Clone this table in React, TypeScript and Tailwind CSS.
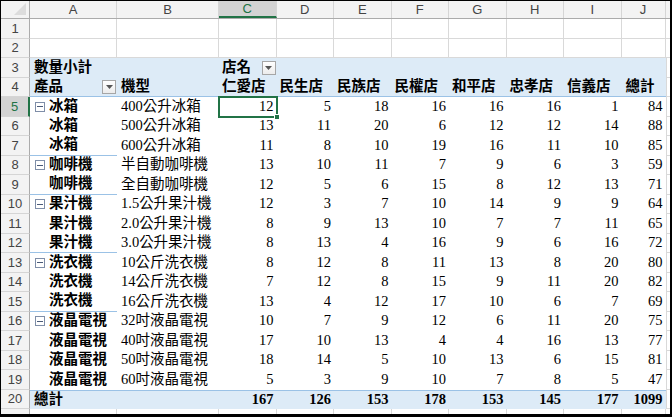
import React from 'react';

const stores = ['仁愛店', '民生店', '民族店', '民權店', '和平店', '忠孝店', '信義店'];

type Row = { group: string; first: boolean; model: string; values: number[]; total: number; sepBelow?: boolean };

const rows: Row[] = [
    { group: '冰箱', first: true, model: '400公升冰箱', values: [12, 5, 18, 16, 16, 16, 1], total: 84 },
    { group: '冰箱', first: false, model: '500公升冰箱', values: [13, 11, 20, 6, 12, 12, 14], total: 88 },
    { group: '冰箱', first: false, model: '600公升冰箱', values: [11, 8, 10, 19, 16, 11, 10], total: 85, sepBelow: true },
    { group: '咖啡機', first: true, model: '半自動咖啡機', values: [13, 10, 11, 7, 9, 6, 3], total: 59 },
    { group: '咖啡機', first: false, model: '全自動咖啡機', values: [12, 5, 6, 15, 8, 12, 13], total: 71, sepBelow: true },
    { group: '果汁機', first: true, model: '1.5公升果汁機', values: [12, 3, 7, 10, 14, 9, 9], total: 64 },
    { group: '果汁機', first: false, model: '2.0公升果汁機', values: [8, 9, 13, 10, 7, 7, 11], total: 65 },
    { group: '果汁機', first: false, model: '3.0公升果汁機', values: [8, 13, 4, 16, 9, 6, 16], total: 72, sepBelow: true },
    { group: '洗衣機', first: true, model: '10公斤洗衣機', values: [8, 12, 8, 11, 13, 8, 20], total: 80 },
    { group: '洗衣機', first: false, model: '14公斤洗衣機', values: [7, 12, 8, 15, 9, 11, 20], total: 82 },
    { group: '洗衣機', first: false, model: '16公斤洗衣機', values: [13, 4, 12, 17, 10, 6, 7], total: 69, sepBelow: true },
    { group: '液晶電視', first: true, model: '32吋液晶電視', values: [10, 7, 9, 12, 6, 11, 20], total: 75 },
    { group: '液晶電視', first: false, model: '40吋液晶電視', values: [17, 10, 13, 4, 4, 16, 13], total: 77 },
    { group: '液晶電視', first: false, model: '50吋液晶電視', values: [18, 14, 5, 10, 13, 6, 15], total: 81 },
    { group: '液晶電視', first: false, model: '60吋液晶電視', values: [5, 3, 9, 10, 7, 8, 5], total: 47 },
];

const totals = [167, 126, 153, 178, 153, 145, 177];

const storeW = 'w-[57.5px] shrink-0';

const RowHead: React.FC<{ n?: number; active?: boolean }> = ({ n, active }) => (
    <div
        className={`w-[29px] shrink-0 flex items-center justify-center text-[13px] border-b border-[#d5d5d5] ${
            active
                ? 'bg-[#d3d3d3] text-[#217346] border-r-2 border-r-[#217346]'
                : 'bg-[#f3f3f3] text-[#444] border-r border-r-[#ababab]'
        }`}
        style={{ fontFamily: '"Liberation Sans", sans-serif' }}
    >
        {n}
    </div>
);

const Filler: React.FC = () => <div className="flex-1 border-l border-b border-[#d9d9d9]" />;

const DropBtn: React.FC = () => (
    <span className="w-[14px] h-[14px] border border-[#a6a6a6] bg-gradient-to-b from-white to-[#ececec] flex items-center justify-center">
        <svg width="7" height="4" viewBox="0 0 7 4">
            <path d="M0 0 L7 0 L3.5 4 Z" fill="#555" />
        </svg>
    </span>
);

const Minus: React.FC = () => (
    <span className="w-[10px] h-[10px] border border-[#7f8ea8] flex items-center justify-center mr-[3px] bg-white">
        <span className="w-[6px] h-px bg-[#4a5a78]" />
    </span>
);

const App: React.FC = () => {
    const letters = ['A', 'B', 'C', 'D', 'E', 'F', 'G', 'H', 'I', 'J'];
    const letterW = ['w-[87px]', 'w-[102px]', 'w-[57.5px]', 'w-[57.5px]', 'w-[57.5px]', 'w-[57.5px]', 'w-[57.5px]', 'w-[57.5px]', 'w-[57.5px]', 'w-[44px]'];

    const blankRow = (n?: number) => (
        <div key={n ?? 'x'} className="flex h-[19.5px]">
            <RowHead n={n} />
            {letterW.map((w, i) => (
                <div key={i} className={`${w} shrink-0 border-r border-b border-[#d9d9d9]`} />
            ))}
            <div className="flex-1 border-b border-[#d9d9d9]" />
        </div>
    );

    return (
        <div
            className="w-[672px] h-[417px] bg-white overflow-hidden border-t border-l border-r-2 border-b-[3px] border-black text-[14.5px] text-black"
            style={{ fontFamily: '"Liberation Serif", "Noto Sans CJK TC", serif' }}
        >
            {/* column headers */}
            <div className="flex h-[18px] bg-[#f3f3f3] border-b border-[#ababab]">
                <div className="w-[29px] shrink-0 border-r border-[#ababab] relative overflow-hidden">
                    <svg className="absolute right-[3px] bottom-[3px]" width="12" height="12" viewBox="0 0 12 12">
                        <path d="M12 0 L12 12 L0 12 Z" fill="#dcdcdc" />
                    </svg>
                </div>
                {letters.map((l, i) => (
                    <div
                        key={l}
                        className={`${letterW[i]} shrink-0 flex items-center justify-center text-[13px] border-r border-[#d5d5d5] ${
                            l === 'C' ? 'bg-[#d3d3d3] text-[#217346] border-b-2 border-b-[#217346]' : 'text-[#444]'
                        }`}
                        style={{ fontFamily: '"Liberation Sans", sans-serif' }}
                    >
                        {l}
                    </div>
                ))}
                <div className="flex-1" />
            </div>

            {blankRow(1)}
            {blankRow(2)}

            {/* row 3 */}
            <div className="flex h-[19.5px]">
                <RowHead n={3} />
                <div className="flex bg-[#ddebf7] font-bold">
                    <div className="w-[189px] shrink-0 flex items-center pl-[4px]">數量小計</div>
                    <div className={`${storeW} flex items-center pl-[3px]`}>
                        店名
                        <span className="ml-auto mr-[1px]">
                            <DropBtn />
                        </span>
                    </div>
                    <div className="w-[389px] shrink-0" />
                </div>
                <Filler />
            </div>

            {/* row 4 */}
            <div className="flex h-[19.5px]">
                <RowHead n={4} />
                <div className="flex bg-[#ddebf7] border-b border-[#9bc2e6] font-bold">
                    <div className="w-[87px] shrink-0 flex items-center pl-[4px]">
                        產品
                        <span className="ml-auto mr-[1px]">
                            <DropBtn />
                        </span>
                    </div>
                    <div className="w-[102px] shrink-0 flex items-center pl-[4px]">機型</div>
                    {stores.map((s) => (
                        <div key={s} className={`${storeW} flex items-center pl-[3px]`}>
                            {s}
                        </div>
                    ))}
                    <div className="w-[44px] shrink-0 flex items-center pl-[4px]">總計</div>
                </div>
                <Filler />
            </div>

            {/* data rows */}
            {rows.map((r, idx) => {
                const n = idx + 5;
                const selected = n === 5;
                return (
                    <div key={n} className="flex h-[19.5px]">
                        <RowHead n={n} active={selected} />
                        <div
                            className={`w-[87px] shrink-0 flex items-center font-bold pl-[5px] ${
                                r.sepBelow ? 'border-b border-[#9bc2e6]' : ''
                            }`}
                        >
                            {r.first ? <Minus /> : <span className="w-[13px] shrink-0" />}
                            <span className="ml-[1px]">{r.group}</span>
                        </div>
                        <div className="w-[102px] shrink-0 flex items-center pl-[4px] whitespace-nowrap">{r.model}</div>
                        {r.values.map((v, i) => (
                            <div
                                key={i}
                                className={`${storeW} flex items-center justify-end pr-[3px] relative ${
                                    selected && i === 0 ? 'outline-2 outline-[#217346] -outline-offset-1' : ''
                                }`}
                            >
                                {v}
                                {selected && i === 0 && (
                                    <span className="absolute -right-[3px] -bottom-[3px] w-[6px] h-[6px] bg-[#217346] border border-white" />
                                )}
                            </div>
                        ))}
                        <div className="w-[44px] shrink-0 flex items-center justify-end pr-[3px]">{r.total}</div>
                        <Filler />
                    </div>
                );
            })}

            {/* total row */}
            <div className="flex h-[19.5px]">
                <RowHead n={20} />
                <div className="flex bg-[#ddebf7] border-t border-[#9bc2e6] font-bold">
                    <div className="w-[189px] shrink-0 flex items-center pl-[4px]">總計</div>
                    {totals.map((t, i) => (
                        <div key={i} className={`${storeW} flex items-center justify-end pr-[3px]`}>
                            {t}
                        </div>
                    ))}
                    <div className="w-[44px] shrink-0 flex items-center justify-end pr-[3px]">1099</div>
                </div>
                <Filler />
            </div>

            {/* row 21, cut off by the frame */}
            {blankRow()}
        </div>
    );
};

export default App;
